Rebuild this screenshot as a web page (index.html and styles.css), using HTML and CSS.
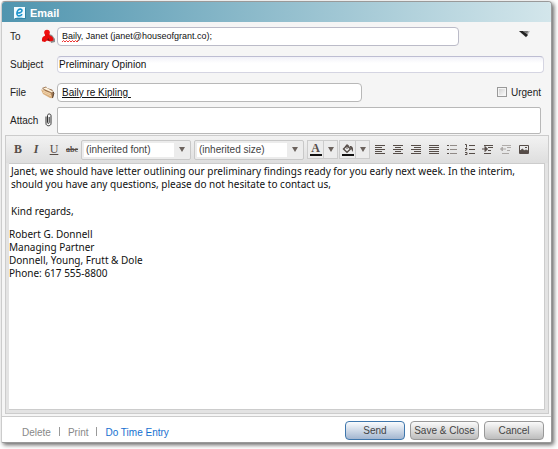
FILE: index.html
```html
<!DOCTYPE html>
<html lang="en">

<head>
    <meta charset="UTF-8">
    <meta name="viewport" content="width=device-width, initial-scale=1.0">
    <title>Email</title>
    <link rel="stylesheet" href="styles.css">
</head>

<body>
    <form class="window">
        <header class="titleBar">
            <svg class="logo" width="12" height="12" viewBox="0 0 12 12">
                <rect width="11" height="11.500" fill="#f2fbff" />
                <path d="M11.500 1v10.500H1" fill="none" stroke="#2f86a8" />
                <path d="M3 6c2.500.3 5-.8 5-2.400C8 1.800 5.500 1.600 4.200 3 2.600 4.700 2.400 8 4 8.700c1.500.6 3-.2 4.200-1.500" fill="none" stroke="#1a93cc" stroke-width="1.600" />
                <path d="M2.500 10.300h6" stroke="#8fd0ea" />
            </svg>
            <h1 class="title">Email</h1>
        </header>

        <div class="fields">
            <div class="row">
                <label class="label" for="to">To</label>
                <svg class="rowIcon" width="14" height="14" viewBox="0 0 14 14">
                    <path d="M8 5l3 1 3 4v3l-4 1z" fill="#8d8d8d" />
                    <circle cx="6" cy="3.500" r="2.800" fill="#f01010" />
                    <path d="M4 5h4l1 1.500c2.500.5 3.500 2.500 3.500 5l-3.500 1L6 11.500l-2 1.500-3-.8c-.4-3 .5-5 3-5.500z" fill="#e80c0c" />
                    <path d="M6 11l1.500-2L9 12z" fill="#7d1515" />
                </svg>
                <div class="cell">
                    <div class="toBox">
                        <input class="field toField" type="text" id="to" value="Baily, Janet (janet@houseofgrant.co);" spellcheck="false">
                        <svg class="squiggle" width="17" height="3" viewBox="0 0 17 3">
                            <path d="M0 2l1.500-1.500L3 2 4.500.5 6 2 7.500.5 9 2 10.500.5 12 2 13.500.5 15 2 16.500.5" fill="none" stroke="#e33" />
                        </svg>
                    </div>
                    <button class="more" type="button" aria-label="More">
                        <svg width="12" height="8" viewBox="0 0 12 8">
                            <path d="M0 1h11L7 7.500z" fill="#b5b5b5" />
                            <path d="M0 1h4l5 4-2 2z" fill="#222" />
                            <path d="M4 1h5L8 4z" fill="#777" />
                        </svg>
                    </button>
                </div>
            </div>

            <div class="row rowWide">
                <label class="label" for="subject">Subject</label>
                <span class="rowIcon"></span>
                <div class="cell">
                    <input class="field subjectField" type="text" id="subject" value="Preliminary Opinion">
                </div>
            </div>

            <div class="row">
                <label class="label" for="file">File</label>
                <svg class="rowIcon" width="14" height="14" viewBox="0 0 14 14">
                    <path d="M1 3l4-1.500 1 1.500 5 1.500 2 3-1 5-2 .5z" fill="#9a7350" />
                    <path d="M2 3.500l3-1 7 4-1 1z" fill="#fff4df" />
                    <path d="M0 4.500l3 .3 1 1.200 6 2 1.500 5.200L9 13 2 9z" fill="#d9ae7c" />
                    <path d="M1.500 5.500l8 3.500M2 7.200l8 3.600" stroke="#f2d5ae" fill="none" />
                    <path d="M12 7l1 1-1.500 5" stroke="#5f4632" fill="none" />
                </svg>
                <div class="cell">
                    <input class="field fileField" type="text" id="file" value="Baily re Kipling " spellcheck="false">
                    <span class="urgent">
                        <input class="check" type="checkbox" id="urgent">
                        <label for="urgent">Urgent</label>
                    </span>
                </div>
            </div>

            <div class="row">
                <label class="label" for="attach">Attach</label>
                <svg class="rowIcon" width="14" height="14" viewBox="0 0 14 14">
                    <path d="M5 3.500v7c0 3 5 3 5 0v-8C10 .5 6.500.5 6.500 2.500v7c0 1.200 1.700 1.200 1.700 0V4" fill="none" stroke="#333" />
                </svg>
                <div class="cell">
                    <input class="field attachField" type="text" id="attach">
                </div>
            </div>
        </div>

        <div class="editor">
            <div class="toolbar">
                <button class="tool bold" type="button">B</button>
                <button class="tool italic" type="button">I</button>
                <button class="tool underline" type="button">U</button>
                <button class="tool strike" type="button">abc</button>

                <div class="drop">
                    <select class="select" aria-label="Font">
                        <option>(inherited font)</option>
                    </select>
                    <svg class="arrow" width="6" height="5" viewBox="0 0 6 5"><path d="M0 0h6L3 5z" /></svg>
                </div>
                <div class="drop">
                    <select class="select" aria-label="Size">
                        <option>(inherited size)</option>
                    </select>
                    <svg class="arrow" width="6" height="5" viewBox="0 0 6 5"><path d="M0 0h6L3 5z" /></svg>
                </div>

                <div class="split">
                    <button class="splitMain" type="button"><span class="letter">A</span></button>
                    <button class="splitArrow" type="button" aria-label="Text colors">
                        <svg width="6" height="5" viewBox="0 0 6 5"><path d="M0 0h6L3 5z" /></svg>
                    </button>
                </div>
                <div class="split">
                    <button class="splitMain" type="button" aria-label="Fill">
                        <svg class="letter" width="12" height="10" viewBox="0 0 12 10">
                            <path d="M1.500 5L5 1.500 8.500 5 5 8.300z" fill="#eee" stroke="#564d48" stroke-width="1.400" />
                            <path d="M3.500 3C3.500.5 6.500.3 7 2.500M5 5V2" fill="none" stroke="#564d48" />
                            <path d="M8 2c3 0 3.500 2.500 2.700 6C9.500 6 9.500 4.500 8 3.500z" fill="#564d48" />
                        </svg>
                    </button>
                    <button class="splitArrow" type="button" aria-label="Fill colors">
                        <svg width="6" height="5" viewBox="0 0 6 5"><path d="M0 0h6L3 5z" /></svg>
                    </button>
                </div>

                <button class="tool" type="button" aria-label="Align left">
                    <svg width="10" height="10" viewBox="0 0 10 10"><path d="M0 .5h10M0 2.500h7M0 4.500h10M0 6.500h7M0 8.500h10" /></svg>
                </button>
                <button class="tool" type="button" aria-label="Center">
                    <svg width="10" height="10" viewBox="0 0 10 10"><path d="M0 .5h10M2 2.500h6M0 4.500h10M2 6.500h6M0 8.500h10" /></svg>
                </button>
                <button class="tool" type="button" aria-label="Align right">
                    <svg width="10" height="10" viewBox="0 0 10 10"><path d="M0 .5h10M3 2.500h7M0 4.500h10M3 6.500h7M0 8.500h10" /></svg>
                </button>
                <button class="tool" type="button" aria-label="Justify">
                    <svg width="10" height="10" viewBox="0 0 10 10"><path d="M0 .5h10M0 2.500h10M0 4.500h10M0 6.500h10M0 8.500h10" /></svg>
                </button>
                <button class="tool" type="button" aria-label="Bulleted list">
                    <svg width="10" height="10" viewBox="0 0 10 10"><path d="M0 .5h2M0 4.500h2M0 8.500h2" /><path d="M3 .5h7M3 4.500h7M3 8.500h7" opacity=".6" /></svg>
                </button>
                <button class="tool" type="button" aria-label="Numbered list">
                    <svg width="10" height="12" viewBox="0 0 10 12"><path d="M0 .5h1.500v3M0 4.500h2v1l-2 1M0 8.500h2v2H0" /><path d="M4 1.500h6M4 5.500h6M4 9.500h6" /></svg>
                </button>
                <button class="tool" type="button" aria-label="Indent">
                    <svg width="12" height="10" viewBox="0 0 12 10"><path d="M2 .5h9M6 2.500h5M6 5.500h3M2 8.500h7" /><path d="M0 4h5M3 1.500v5L5.500 4z" fill="#564d48" /></svg>
                </button>
                <button class="tool" type="button" aria-label="Outdent" disabled>
                    <svg width="12" height="10" viewBox="0 0 12 10"><path d="M2 .5h9M7 2.500h4M7 5.500h3M2 8.500h7" /><path d="M1 4h5M2.500 2v4L.5 4z" fill="#564d48" /></svg>
                </button>
                <button class="tool" type="button" aria-label="Picture">
                    <svg width="12" height="10" viewBox="0 0 12 10"><path d="M1.500.5h9v8h-9z" /><path d="M2 8V6l2.500-2L6 6l2-1 2 1v2z" fill="#564d48" /><path d="M7 2.500h2" /></svg>
                </button>
            </div>

            <div class="message" contenteditable="true" spellcheck="false" role="textbox" aria-multiline="true" aria-label="Message">
                <p class="text">Janet, we should have letter outlining our preliminary findings ready for you early next week. In the interim, should you have any questions, please do not hesitate to contact us,</p>
                <p class="text">Kind regards,</p>
                <p class="signature">Robert G. Donnell<br>Managing Partner<br>Donnell, Young, Frutt &amp; Dole<br>Phone: 617 555-8800</p>
            </div>
        </div>

        <footer class="footer">
            <nav class="links">
                <a class="link" href="#">Delete</a>
                <a class="link" href="#">Print</a>
                <a class="link linkBlue" href="#">Do Time Entry</a>
            </nav>
            <div class="buttons">
                <button class="button send" type="button">Send</button>
                <button class="button save" type="button">Save &amp; Close</button>
                <button class="button" type="button">Cancel</button>
            </div>
        </footer>
    </form>
</body>

</html>
```
FILE: styles.css
```css
* {
    box-sizing: border-box;
}

body {
    min-height: 100vh;
    margin: 0;
    padding: 1px 6px 6px 1px;
    display: flex;
    background: #fff;
    font-family: "Liberation Sans", Arial, sans-serif;
    font-size: 10px;
    color: #222;
}

input,
select,
button {
    margin: 0;
    font-family: inherit;
    font-size: 10px;
    color: inherit;
}

svg {
    display: block;
}

.window {
    flex: 1;
    min-width: 0;
    display: flex;
    flex-direction: column;
    border: 1px solid #999;
    border-left-color: #ccc;
    border-radius: 4px 4px 2px 2px;
    background: #f5f5f5;
    box-shadow: 2px 2px 4px #666;
}

.titleBar {
    height: 20px;
    padding: 2px 12px 0;
    display: flex;
    align-items: center;
    gap: 4px;
    border-radius: 3px 3px 0 0;
    background: linear-gradient(to right, #5095af, #d3e6eb);
}

.title {
    margin: 0;
    font-size: 11px;
    line-height: 14px;
    color: #fff;
}

/* fields */
.fields {
    padding-left: 8px;
}

.row {
    height: 28px;
    padding-right: 10px;
    display: flex;
    align-items: center;
}

.rowWide {
    padding-right: 7px;
}

.label {
    width: 31px;
}

.rowIcon {
    width: 14px;
    margin-right: 2px;
    flex: none;
}

.cell {
    flex: 1;
    min-width: 0;
    display: flex;
    align-items: center;
    justify-content: space-between;
}

.field {
    width: 100%;
    height: 19px;
    padding: 0 4px;
    border: 1px solid #b8b8b8;
    border-radius: 4px;
    background: #fff;
    color: #111;
}

.toBox {
    position: relative;
    width: 83%;
}

.toField {
    border-color: #bbbbc8;
    font-size: 9px;
}

/* misspelled word mark */
.squiggle {
    position: absolute;
    left: 5px;
    top: 13px;
}

.subjectField {
    height: 17px;
    padding: 0 1px;
    border-color: #bdbdd2 #d5d5e2 #d5d5e2;
    background: linear-gradient(#f1f1f8, #fff 6px);
}

.fileField {
    width: 63%;
    text-decoration: underline;
}

.attachField {
    height: 27px;
    border-radius: 2px;
}

.more {
    margin-right: 10px;
    padding: 0 0 4px;
    border: 0;
    background: none;
}

.urgent {
    display: flex;
    align-items: center;
    gap: 4px;
}

.check {
    appearance: none;
    width: 10px;
    height: 10px;
    border: 1px solid #999;
    background: linear-gradient(135deg, #ccc, #fff);
    box-shadow: inset 0 0 0 1px #f5f5f5;
}

/* editor */
.editor {
    flex: 1;
    margin: 1px 2px 2px 3px;
    padding: 0 3px 3px;
    display: flex;
    flex-direction: column;
    border: 1px solid #ccc;
    background: #e3e3e3;
}

.toolbar {
    height: 27px;
    margin: 0 -3px;
    padding: 0 3px;
    display: flex;
    align-items: center;
    background: linear-gradient(#f2f2f2, #dedede);
}

.tool {
    width: 18px;
    height: 20px;
    padding: 0;
    display: flex;
    align-items: center;
    justify-content: center;
    border: 0;
    background: none;
    color: #564d48;
}

.tool svg {
    fill: none;
    stroke: #564d48;
}

.tool:disabled {
    opacity: .4;
}

.bold,
.italic,
.underline {
    font-family: "Liberation Serif", "Times New Roman", serif;
    font-size: 12px;
}

.bold {
    font-weight: bold;
}

.italic {
    font-style: italic;
    font-weight: bold;
}

.underline {
    text-decoration: underline;
}

.strike {
    font-family: "Liberation Serif", "Times New Roman", serif;
    font-size: 8px;
    font-weight: bold;
    text-decoration: line-through;
}

.drop {
    position: relative;
    width: 110px;
    margin-right: 3px;
    padding: 2px;
    border: 1px solid #c8c8c8;
    border-radius: 2px;
    background: #ececec;
}

.select {
    appearance: none;
    display: block;
    width: 100%;
    height: 14px;
    padding: 0 16px 0 2px;
    border: 0;
    background: linear-gradient(to right, #fff 90px, #ececec 90px);
    color: #444;
}

.arrow {
    position: absolute;
    right: 5px;
    top: 6px;
    pointer-events: none;
}

.arrow,
.splitArrow svg {
    fill: #6b625d;
}

.split {
    width: 31px;
    height: 19px;
    margin-right: 1px;
    display: flex;
    border: 1px solid #ccc;
    background: #ececec;
}

.splitMain,
.splitArrow {
    padding: 0;
    display: flex;
    align-items: center;
    justify-content: center;
    border: 0;
    background: none;
}

.splitMain {
    width: 16px;
    border-right: 1px solid #ccc;
}

.splitArrow {
    flex: 1;
}

.letter {
    width: 12px;
    box-sizing: content-box;
    border-bottom: 2px solid #111;
    font-family: "Liberation Serif", "Times New Roman", serif;
    font-size: 12px;
    font-weight: bold;
    line-height: 11px;
    color: #564d48;
}

.message {
    flex: 1;
    padding: 1px 0;
    background: #fff;
    border: 1px solid #ccc;
    border-width: 1px 1px 1px 0;
    font-family: "Noto Sans", Verdana, sans-serif;
    font-size: 10px;
    line-height: 13px;
    color: #111;
}

.text {
    margin: 0 0 14px;
    padding: 0 20px 0 2px;
}

.signature {
    margin: -4px 0 0;
}

/* footer */
.footer {
    padding: 4px 7px 2px 20px;
    display: flex;
    align-items: center;
    justify-content: space-between;
    border-top: 1px solid #ccc;
    border-radius: 0 0 2px 2px;
    background: #fff;
}

.links {
    padding-top: 3px;
    display: flex;
}

.link {
    color: #888;
    text-decoration: none;
}

.link + .link {
    margin-left: 8px;
}

.link + .link::before {
    content: "";
    display: inline-block;
    height: 9px;
    margin-right: 8px;
    border-left: 1px solid #999;
}

.linkBlue {
    color: #1570d0;
}

.buttons {
    display: flex;
    gap: 5px;
}

.button {
    width: 60px;
    height: 19px;
    padding: 0;
    border: 1px solid #999;
    border-radius: 4px;
    background: linear-gradient(#fafafa, #bdbdbd);
    color: #444;
}

.send {
    border-color: #3f77ad;
    background: linear-gradient(#fafcfe, #a3b6d0);
}

.save {
    width: 69px;
}
```
